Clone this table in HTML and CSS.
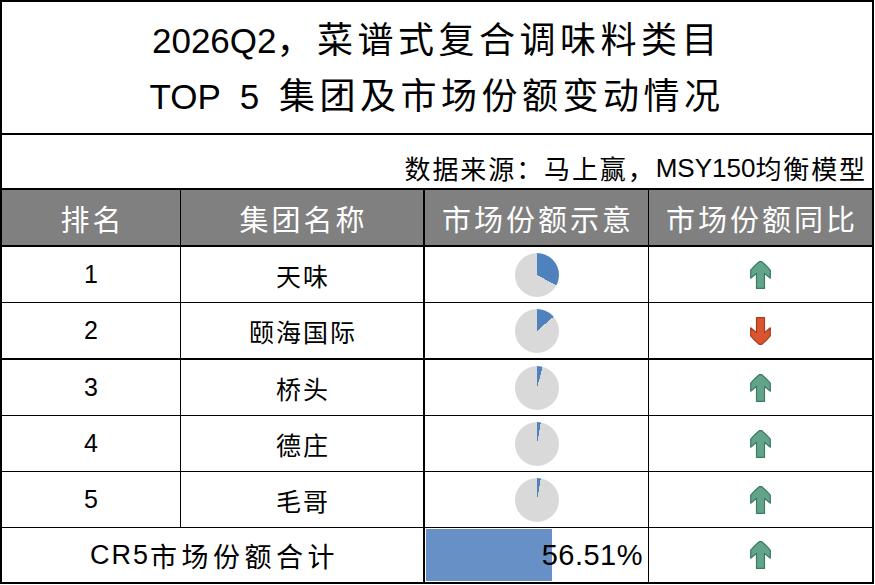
FILE: index.html
```html
<!DOCTYPE html>
<html lang="zh-CN">
<head>
<meta charset="utf-8">
<title>2026Q2 菜谱式复合调味料类目 TOP 5</title>
<link rel="stylesheet" href="styles.css">
</head>
<body>
<div class="sheet">
  <div class="title">
    <div class="tline"><span class="lat">2026Q2</span>，菜谱式复合调味料类目</div>
    <div class="tline"><span class="lat wide">TOP 5 </span>集团及市场份额变动情况</div>
  </div>
  <div class="source">数据来源：马上赢，<span class="lat2">MSY150</span>均衡模型</div>

  <div class="row head">
    <div class="c c1">排名</div>
    <div class="c c2">集团名称</div>
    <div class="c c3">市场份额示意</div>
    <div class="c c4">市场份额同比</div>
  </div>

  <div class="row r thin">
    <div class="c c1 num">1</div>
    <div class="c c2 name">天味</div>
    <div class="c c3"><div class="pie" style="background:conic-gradient(#4f81bd 0 32.8%, #d9d9d9 0)"></div></div>
    <div class="c c4"><svg class="arrow" viewBox="0 0 21 28" width="21" height="28"><path class="up" d="M9.2 0.7 H11.8 Q16.5 4.5 20.3 9.2 V17.2 L14.5 12.4 V27.3 H6.5 V12.4 L0.7 17.2 V9.2 Q4.5 4.5 9.2 0.7 Z"/></svg></div>
  </div>

  <div class="row r thick">
    <div class="c c1 num">2</div>
    <div class="c c2 name">颐海国际</div>
    <div class="c c3"><div class="pie" style="background:conic-gradient(#4f81bd 0 13.6%, #d9d9d9 0)"></div></div>
    <div class="c c4"><svg class="arrow" viewBox="0 0 21 28" width="21" height="28"><path class="down" d="M9.2 27.3 H11.8 Q16.5 23.5 20.3 18.8 V10.8 L14.5 15.6 V0.7 H6.5 V15.6 L0.7 10.8 V18.8 Q4.5 23.5 9.2 27.3 Z"/></svg></div>
  </div>

  <div class="row r thin">
    <div class="c c1 num">3</div>
    <div class="c c2 name">桥头</div>
    <div class="c c3"><div class="pie" style="background:conic-gradient(#4f81bd 0 4.1%, #d9d9d9 0)"></div></div>
    <div class="c c4"><svg class="arrow" viewBox="0 0 21 28" width="21" height="28"><path class="up" d="M9.2 0.7 H11.8 Q16.5 4.5 20.3 9.2 V17.2 L14.5 12.4 V27.3 H6.5 V12.4 L0.7 17.2 V9.2 Q4.5 4.5 9.2 0.7 Z"/></svg></div>
  </div>

  <div class="row r thin">
    <div class="c c1 num">4</div>
    <div class="c c2 name">德庄</div>
    <div class="c c3"><div class="pie" style="background:conic-gradient(#4f81bd 0 2.8%, #d9d9d9 0)"></div></div>
    <div class="c c4"><svg class="arrow" viewBox="0 0 21 28" width="21" height="28"><path class="up" d="M9.2 0.7 H11.8 Q16.5 4.5 20.3 9.2 V17.2 L14.5 12.4 V27.3 H6.5 V12.4 L0.7 17.2 V9.2 Q4.5 4.5 9.2 0.7 Z"/></svg></div>
  </div>

  <div class="row r thin">
    <div class="c c1 num">5</div>
    <div class="c c2 name">毛哥</div>
    <div class="c c3"><div class="pie" style="background:conic-gradient(#4f81bd 0 2.8%, #d9d9d9 0)"></div></div>
    <div class="c c4"><svg class="arrow" viewBox="0 0 21 28" width="21" height="28"><path class="up" d="M9.2 0.7 H11.8 Q16.5 4.5 20.3 9.2 V17.2 L14.5 12.4 V27.3 H6.5 V12.4 L0.7 17.2 V9.2 Q4.5 4.5 9.2 0.7 Z"/></svg></div>
  </div>

  <div class="row total">
    <div class="c c12"><span class="lat3">CR5</span>市场份额合计</div>
    <div class="c c3 barcell">
      <div class="bar" style="width:56.51%"></div>
      <span class="pct">56.51%</span>
    </div>
    <div class="c c4"><svg class="arrow" viewBox="0 0 21 28" width="21" height="28"><path class="up" d="M9.2 0.7 H11.8 Q16.5 4.5 20.3 9.2 V17.2 L14.5 12.4 V27.3 H6.5 V12.4 L0.7 17.2 V9.2 Q4.5 4.5 9.2 0.7 Z"/></svg></div>
  </div>
</div>
</body>
</html>
```
FILE: styles.css
```css
html, body {
  margin: 0;
  padding: 0;
  background: #ffffff;
}

body {
  font-family: "Noto Sans CJK SC", sans-serif;
  color: #000;
}

.sheet {
  box-sizing: border-box;
  width: 874px;
  height: 584px;
  border: 2px solid #000;
  display: flex;
  flex-direction: column;
}

.title {
  box-sizing: border-box;
  height: 133px;
  border-bottom: 2px solid #000;
  display: flex;
  flex-direction: column;
  justify-content: center;
  align-items: center;
  padding-bottom: 2px;
}

.tline {
  font-size: 36px;
  line-height: 53px;
  letter-spacing: 4.5px;
  white-space: nowrap;
  padding-left: 0;
}

.lat {
  font-family: "Liberation Sans", sans-serif;
  font-size: 35px;
  letter-spacing: 0;
}

.lat.wide {
  word-spacing: 10px;
}

.source {
  box-sizing: border-box;
  height: 55px;
  border-bottom: 2px solid #000;
  display: flex;
  justify-content: flex-end;
  align-items: flex-end;
  padding: 0 5px 2px 0;
  font-size: 26px;
  line-height: 36px;
  letter-spacing: 1.9px;
  white-space: nowrap;
}

.lat2 {
  font-family: "Liberation Sans", sans-serif;
  font-size: 26px;
  letter-spacing: 0;
}

.row {
  box-sizing: border-box;
  display: grid;
  grid-template-columns: 179px 244px 224px 223px;
}

.c {
  box-sizing: border-box;
  display: flex;
  align-items: center;
  justify-content: center;
  min-width: 0;
}

.c1 { border-right: 1px solid #000; }
.c2 { border-right: 2px solid #000; }
.c3 { border-right: 1px solid #000; }

.head {
  height: 57px;
  border-bottom: 2px solid #000;
  background: #808080;
  color: #ffffff;
  font-size: 29px;
  letter-spacing: 3px;
}

.head .c {
  padding-left: 3px;
}

.r { height: 56px; }
.r.thin { border-bottom: 1px solid #000; }
.r.thick { height: 57px; border-bottom: 2px solid #000; }

.num {
  font-family: "Liberation Sans", sans-serif;
  font-size: 25px;
}

.name {
  font-size: 25px;
  letter-spacing: 2px;
  padding-left: 2px;
}

.pie {
  width: 44px;
  height: 44px;
  border-radius: 50%;
}

.arrow {
  display: block;
}

.up {
  fill: #62a48a;
  stroke: #3a7a60;
  stroke-width: 1.2;
  stroke-linejoin: round;
}

.down {
  fill: #da542f;
  stroke: #a93c1d;
  stroke-width: 1.2;
  stroke-linejoin: round;
}

.total {
  height: 54px;
}

.c12 {
  grid-column: 1 / span 2;
  border-right: 2px solid #000;
  font-size: 27px;
  letter-spacing: 4.5px;
  padding-left: 4px;
}

.lat3 {
  font-family: "Liberation Sans", sans-serif;
  font-size: 27px;
  letter-spacing: 2px;
}

.barcell {
  position: relative;
  justify-content: flex-end;
  padding-right: 5px;
}

.bar {
  position: absolute;
  left: 1px;
  top: 1px;
  bottom: 1px;
  background: #6790c6;
}

.pct {
  position: relative;
  font-family: "Liberation Sans", sans-serif;
  font-size: 29px;
  letter-spacing: 0.5px;
}
```
